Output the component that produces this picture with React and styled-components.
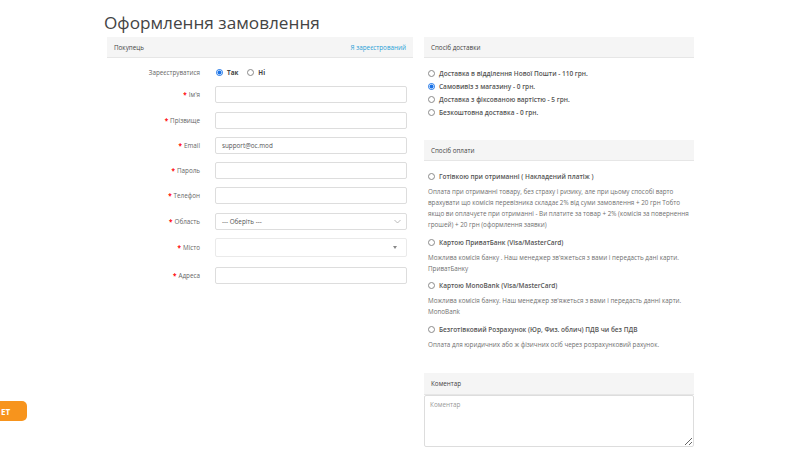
import React from 'react'
import styled, { createGlobalStyle } from 'styled-components';

const GlobalStyle = createGlobalStyle`
  html, body {
    margin: 0;
    padding: 0;
    background: #ffffff;
  }
  body {
    font-family: "Open Sans", "Liberation Sans", Arial, sans-serif;
    color: #555;
    overflow: hidden;
  }
`;

const customerFields = [
  { label: "Ім'я", value: '' },
  { label: 'Прізвище', value: '' },
  { label: 'Email', value: 'support@oc.mod' },
  { label: 'Пароль', value: '' },
  { label: 'Телефон', value: '' },
];

const deliveryMethods = [
  { name: 'Доставка в відділення Нової Пошти - 110 грн.', checked: false },
  { name: 'Самовивіз з магазину - 0 грн.', checked: true },
  { name: 'Доставка з фіксованою вартістю - 5 грн.', checked: false },
  { name: 'Безкоштовна доставка - 0 грн.', checked: false },
];

const paymentMethods = [
  {
    name: 'Готівкою при отриманні ( Накладений платіж )',
    lines: [
      'Оплата при отриманні товару, без страху і ризику, але при цьому способі варто',
      'врахувати що комісія перевізника складає 2% від суми замовлення + 20 грн Тобто',
      'якщо ви оплачуєте при отриманні - Ви платите за товар + 2% (комісія за повернення',
      'грошей) + 20 грн (оформлення заявки)',
    ],
  },
  {
    name: 'Картою ПриватБанк (Visa/MasterCard)',
    lines: [
      "Можлива комісія банку . Наш менеджер зв'яжеться з вами і передасть дані карти.",
      'ПриватБанку',
    ],
  },
  {
    name: 'Картою MonoBank (Visa/MasterCard)',
    lines: [
      "Можлива комісія банку. Наш менеджер зв'яжеться з вами і передасть данні карти.",
      'MonoBank',
    ],
  },
  {
    name: 'Безготівковий Розрахунок (Юр, Физ. облич) ПДВ чи без ПДВ',
    lines: ['Оплата для юридичних або ж фізичних осіб через розрахунковий рахунок.'],
  },
];

const Checkout = () => {
  return (
    <Page>
      <GlobalStyle />
      <Title>Оформлення замовлення</Title>
      <Columns>
        <LeftColumn>
          <PanelHeading>
            <span>Покупець</span>
            <HeadingLink>Я зареєстрований</HeadingLink>
          </PanelHeading>
          <FormBody>
            <RegisterRow>
              <Label>Зареєструватися</Label>
              <RadioGroup>
                <RadioOption>
                  <Radio $checked />
                  <strong>Так</strong>
                </RadioOption>
                <RadioOption>
                  <Radio />
                  <strong>Ні</strong>
                </RadioOption>
              </RadioGroup>
            </RegisterRow>
            {customerFields.map((field) => (
              <FieldRow key={field.label}>
                <Label><Required>*</Required>{field.label}</Label>
                <Input>{field.value}</Input>
              </FieldRow>
            ))}
            <FieldRow>
              <Label><Required>*</Required>Область</Label>
              <Input>
                --- Оберіть ---
                <svg width="7" height="5" viewBox="0 0 7 5">
                  <path d="M0.5 1 L3.5 4 L6.5 1" fill="none" stroke="#aaa" strokeWidth="0.8" />
                </svg>
              </Input>
            </FieldRow>
            <FieldRow>
              <Label><Required>*</Required>Місто</Label>
              <CitySelect>
                <Caret />
              </CitySelect>
            </FieldRow>
            <FieldRow $spaced>
              <Label><Required>*</Required>Адреса</Label>
              <Input />
            </FieldRow>
          </FormBody>
        </LeftColumn>

        <RightColumn>
          <PanelHeading>Спосіб доставки</PanelHeading>
          <DeliveryList>
            {deliveryMethods.map((method) => (
              <OptionRow key={method.name}>
                <Radio $checked={method.checked} />
                {method.name}
              </OptionRow>
            ))}
          </DeliveryList>

          <PanelHeading>Спосіб оплати</PanelHeading>
          <PaymentList>
            {paymentMethods.map((method) => (
              <PaymentItem key={method.name}>
                <OptionRow>
                  <Radio />
                  {method.name}
                </OptionRow>
                <PaymentText>
                  {method.lines.map((line) => (
                    <TextLine key={line}>{line}</TextLine>
                  ))}
                </PaymentText>
              </PaymentItem>
            ))}
          </PaymentList>

          <CommentHeading>Коментар</CommentHeading>
          <CommentBox placeholder="Коментар" />
        </RightColumn>
      </Columns>
      <CallButton>ЕТ</CallButton>
    </Page>
  );
};

export default Checkout


const Page = styled.div`
  width: 800px;
  height: 450px;
  padding: 0 0 0 107px;
  box-sizing: border-box;
  position: relative;
`;

const Title = styled.h1`
  margin: 0 0 0 -3px;
  padding-top: 10px;
  height: 27px;
  font-size: 17.2px;
  line-height: 26px;
  font-weight: 400;
  color: #444;
`;

const Columns = styled.div`
  display: flex;
  gap: 11px;
  align-items: flex-start;
`;

const LeftColumn = styled.div`
  width: 306px;
  display: flex;
  flex-direction: column;
`;

const RightColumn = styled.div`
  width: 270px;
  display: flex;
  flex-direction: column;
`;

const PanelHeading = styled.div`
  height: 20px;
  padding: 0 7px;
  display: flex;
  align-items: center;
  justify-content: space-between;
  background: #f5f5f5;
  border-bottom: 1px solid #e6e6e6;
  font-size: 6.3px;
  color: #444;
`;

const HeadingLink = styled.span`
  color: #2a9fd6;
`;

const FormBody = styled.div`
  padding-top: 8px;
  display: flex;
  flex-direction: column;
  gap: 8.3px;
`;

const RegisterRow = styled.div`
  display: grid;
  grid-template-columns: 93px 192px;
  column-gap: 15px;
  align-items: center;
  height: 12px;
`;

const FieldRow = styled.div`
  display: grid;
  grid-template-columns: 93px 192px;
  column-gap: 15px;
  align-items: center;
  margin-top: ${({ $spaced }) => ($spaced ? '2px' : '0')};
`;

const Label = styled.label`
  text-align: right;
  font-size: 6.3px;
  color: #666;
  white-space: nowrap;
`;

const Required = styled.span`
  color: #f00;
  font-weight: 700;
  margin-right: 2px;
`;

const RadioGroup = styled.div`
  display: flex;
  gap: 9px;
  padding-left: 1px;
`;

const RadioOption = styled.span`
  display: flex;
  align-items: center;
  gap: 4px;
  font-size: 6.3px;
  color: #444;

  strong {
    font-weight: 700;
  }
`;

const Radio = styled.span`
  display: inline-block;
  flex: none;
  width: 7px;
  height: 7px;
  border-radius: 50%;
  box-sizing: border-box;
  border: 0.8px solid ${({ $checked }) => ($checked ? '#1a73e8' : '#8a8a8a')};
  background: ${({ $checked }) => ($checked ? 'radial-gradient(circle, #1a73e8 0 1.9px, #fff 2.1px)' : '#fff')};
`;

const Input = styled.div`
  height: 17px;
  box-sizing: border-box;
  border: 1px solid #ddd;
  border-radius: 2px;
  padding: 0 5px 0 6px;
  display: flex;
  align-items: center;
  justify-content: space-between;
  font-size: 6.3px;
  color: #555;
`;

const CitySelect = styled.div`
  height: 19px;
  box-sizing: border-box;
  border: 1px solid #eaeaea;
  border-radius: 2px;
  display: flex;
  align-items: center;
  justify-content: flex-end;
  padding-right: 9px;
`;

const Caret = styled.span`
  width: 0;
  height: 0;
  border-left: 2.5px solid transparent;
  border-right: 2.5px solid transparent;
  border-top: 3px solid #888;
`;

const DeliveryList = styled.div`
  padding: 9px 0 21px 4px;
  display: flex;
  flex-direction: column;
`;

const OptionRow = styled.div`
  height: 13px;
  display: flex;
  align-items: center;
  gap: 4px;
  font-size: 6.5px;
  font-weight: 600;
  color: #555;
  white-space: nowrap;
`;

const PaymentList = styled.div`
  padding: 9px 0 23px 4px;
  display: flex;
  flex-direction: column;
  gap: 5.5px;
`;

const PaymentItem = styled.div`
  display: flex;
  flex-direction: column;
`;

const PaymentText = styled.p`
  margin: 3px 0 0;
  font-size: 6.3px;
  line-height: 11px;
  color: #707070;
`;

const TextLine = styled.span`
  display: block;
  white-space: nowrap;
`;

const CommentHeading = styled(PanelHeading)`
  height: 21px;
  border-bottom: 1px solid #e6e6e6;
`;

const CommentBox = styled.textarea`
  height: 52px;
  box-sizing: border-box;
  border: 1px solid #ddd;
  border-radius: 2px;
  padding: 4px 5px;
  font-family: inherit;
  font-size: 6.4px;
  color: #555;
  resize: vertical;

  &::placeholder {
    color: #999;
  }
`;

const CallButton = styled.div`
  position: fixed;
  left: 0;
  top: 401px;
  width: 27px;
  height: 20px;
  box-sizing: border-box;
  padding-left: 1px;
  display: flex;
  align-items: center;
  overflow: hidden;
  background: #f7941d;
  border-radius: 0 5px 5px 0;
  color: #fff;
  font-size: 8px;
  font-weight: 700;
`;
